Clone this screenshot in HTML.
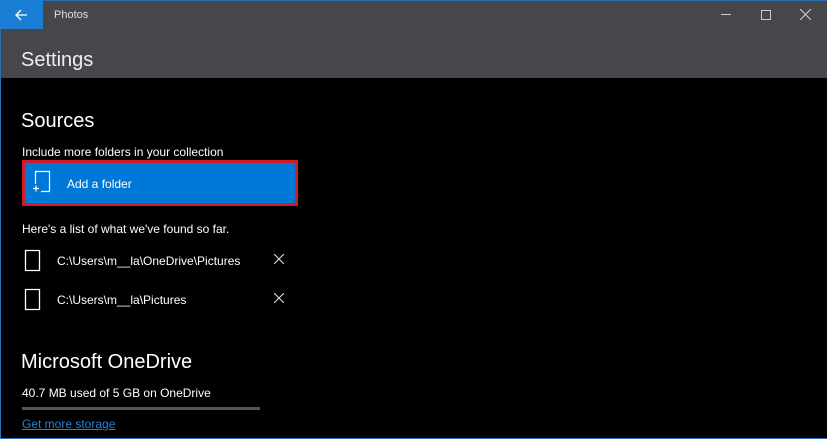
<!DOCTYPE html><html><head><style>
body{margin:0;width:827px;height:439px;background:#000;font-family:"Liberation Sans",sans-serif;color:#fff;position:relative;overflow:hidden}
.a{position:absolute;white-space:nowrap}
</style></head><body>
<div class="a" style="left:0;top:0;width:827px;height:78px;background:#46474b"></div>
<div class="a" style="left:0;top:0;width:827px;height:1px;background:#2a6fb8"></div>
<div class="a" style="left:0;top:0;width:1px;height:439px;background:#2a6fb8"></div>
<div class="a" style="left:0;top:438px;width:827px;height:1px;background:#2a6fb8"></div>
<div class="a" style="left:0;top:0;width:43px;height:29px;background:#1a7fd4"></div>
<svg class="a" style="left:14px;top:8px" width="14" height="14" viewBox="0 0 14 14"><path d="M13 7H2M7 2L2 7l5 5" stroke="#fff" stroke-width="1.3" fill="none"/></svg>
<div class="a" style="left:54px;top:9px;font-size:11px;color:#ddd">Photos</div>
<div class="a" style="left:721px;top:14px;width:10px;height:1px;background:#ccc"></div>
<div class="a" style="left:761px;top:10px;width:8px;height:8px;border:1px solid #ccc"></div>
<svg class="a" style="left:800px;top:9px" width="11" height="11"><path d="M0 0L11 11M11 0L0 11" stroke="#ccc" stroke-width="1.1"/></svg>
<div class="a" style="left:21px;top:49px;font-size:20px;color:#eee">Settings</div>
<div class="a" style="left:21px;top:110px;font-size:20px">Sources</div>
<div class="a" style="left:22px;top:145px;font-size:12px">Include more folders in your collection</div>
<div class="a" style="left:22px;top:160px;width:270px;height:40px;background:#0078d7;border:3px solid #d01c2a"></div>
<svg class="a" style="left:31px;top:170px" width="24" height="24"><path d="M4.5 14V1.5h14v20H10M18.5 17v4.5M2 18.5h6M5 15.5v6" stroke="#fff" stroke-width="1.2" fill="none"/></svg>
<div class="a" style="left:67px;top:177px;font-size:12px">Add a folder</div>
<div class="a" style="left:22px;top:222px;font-size:12px">Here's a list of what we've found so far.</div>
<svg class="a" style="left:24px;top:249px" width="20" height="24"><path d="M1.5 1.5h14v20h-14zM15.5 17v4.5" stroke="#fff" stroke-width="1.3" fill="none"/></svg>
<div class="a" style="left:57px;top:254px;font-size:12px">C:\Users\m__la\OneDrive\Pictures</div>
<svg class="a" style="left:274px;top:254px" width="10" height="10"><path d="M0 0L10 10M10 0L0 10" stroke="#ddd" stroke-width="1.1"/></svg>
<svg class="a" style="left:24px;top:288px" width="20" height="24"><path d="M1.5 1.5h14v20h-14zM15.5 17v4.5" stroke="#fff" stroke-width="1.3" fill="none"/></svg>
<div class="a" style="left:57px;top:293px;font-size:12px">C:\Users\m__la\Pictures</div>
<svg class="a" style="left:274px;top:293px" width="10" height="10"><path d="M0 0L10 10M10 0L0 10" stroke="#ddd" stroke-width="1.1"/></svg>
<div class="a" style="left:21px;top:351px;font-size:20px">Microsoft OneDrive</div>
<div class="a" style="left:22px;top:386px;font-size:12px">40.7 MB used of 5 GB on OneDrive</div>
<div class="a" style="left:22px;top:407px;width:238px;height:3px;background:#555"></div>
<div class="a" style="left:22px;top:417px;font-size:12px;color:#2a7fd8;text-decoration:underline">Get more storage</div>
</body></html>
